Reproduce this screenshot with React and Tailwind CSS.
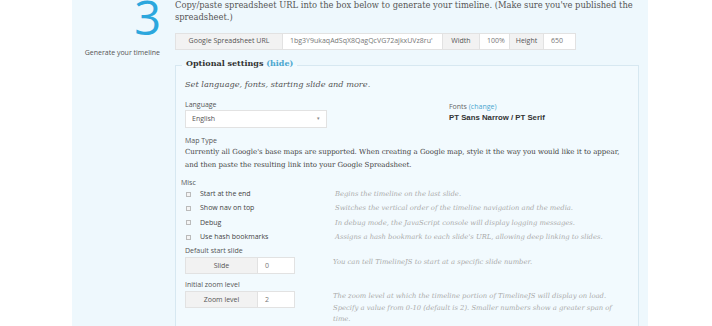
import React from 'react';

const serif = "font-['DejaVu_Serif',serif]";
const sans = "font-['Open_Sans',sans-serif]";

const miscOptions = [
    { label: 'Start at the end', help: 'Begins the timeline on the last slide.' },
    { label: 'Show nav on top', help: 'Switches the vertical order of the timeline navigation and the media.' },
    { label: 'Debug', help: 'In debug mode, the JavaScript console will display logging messages.' },
    { label: 'Use hash bookmarks', help: "Assigns a hash bookmark to each slide's URL, allowing deep linking to slides." },
];

const Addon = ({ children, className = '' }) => (
    <div className={`h-full flex items-center justify-center bg-[#f2f2f2] border border-[#e2e2e2] text-[#555] ${className}`}>
        {children}
    </div>
);

const Field = ({ children, className = '' }) => (
    <div className={`h-full flex items-center px-[7px] bg-white border border-l-0 border-[#e2e2e2] text-[#777] ${className}`}>
        {children}
    </div>
);

const SmallGroup = ({ label, value }) => (
    <div className={`flex h-[17px] text-[7px] shrink-0 ${sans}`}>
        <Addon className="w-[73px]">{label}</Addon>
        <Field className="w-[37px]">{value}</Field>
    </div>
);

const Label = ({ children, className = '' }) => (
    <div className={`text-[7px] leading-[10px] text-[#555] ${sans} ${className}`}>{children}</div>
);

export default function App() {
    return (
        <div className="w-[712px] h-[326px] overflow-hidden bg-white">
            <div className="ml-[72px] w-[576px] h-full bg-[#eef8fd] flex">
                {/* step number */}
                <div className="w-[103px] pr-[15px] flex flex-col items-end shrink-0">
                    <div className={`text-[47px] leading-[50px] text-[#2ca7dd] font-normal mt-[-8px] mr-[-1px] ${sans}`}>3</div>
                    <div className={`text-[7px] text-[#555] mt-[6px] ${sans}`}>Generate your timeline</div>
                </div>

                <div className="w-[464px]">
                    <p className={`text-[8.35px] leading-[12px] text-[#555] mt-[-1px] ${serif}`}>
                        Copy/paste spreadsheet URL into the box below to generate your timeline. (Make sure you've published the spreadsheet.)
                    </p>

                    <div className={`flex h-[17px] mt-[10px] text-[7px] ${sans}`}>
                        <Addon className="w-[108px]">Google Spreadsheet URL</Addon>
                        <Field className="w-[160px] overflow-hidden whitespace-nowrap">1bg3Y9ukaqAdSqX8QagQcVG72ajkxUVz8ru'</Field>
                        <Addon className="w-[37px] border-l-0">Width</Addon>
                        <Field className="w-[30px]">100%</Field>
                        <Addon className="w-[34px] border-l-0">Height</Addon>
                        <Field className="w-[32px]">650</Field>
                    </div>

                    <fieldset className="mt-[9px] border border-[#d7e8f1] bg-[#f2fafe] pl-[9px] pr-[10px] pb-[10px] min-w-0">
                        <legend className={`relative -top-[2px] ml-[-3px] px-[4px] text-[8px] leading-[12px] font-bold text-[#333] ${serif}`}>
                            Optional settings <span className="text-[#4aa6cf]">(hide)</span>
                        </legend>

                        <p className={`italic text-[8.2px] leading-[12px] text-[#555] mt-[7px] ${serif}`}>Set language, fonts, starting slide and more.</p>

                        <div className="flex mt-[10px]">
                            <div className="w-[264px]">
                                <Label>Language</Label>
                                <div className={`w-[142px] h-[18px] bg-white border border-[#e2e2e2] flex items-center justify-between px-[6px] text-[7px] text-[#555] ${sans}`}>
                                    <span>English</span>
                                    <span className="text-[5px] text-[#888]">▾</span>
                                </div>
                            </div>
                            <div className="pt-[2px]">
                                <Label className="text-[#666]">
                                    Fonts <span className="text-[#4aa6cf]">(change)</span>
                                </Label>
                                <div className="text-[7.8px] leading-[12px] font-bold text-[#333] font-['Liberation_Sans_Narrow','Liberation_Sans',sans-serif]">
                                    PT Sans Narrow / PT Serif
                                </div>
                            </div>
                        </div>

                        <Label className="mt-[8px]">Map Type</Label>
                        <p className={`w-[436px] text-[7px] leading-[13px] text-[#444] ${serif}`}>
                            Currently all Google's base maps are supported. When creating a Google map, style it the way you would like it to appear, and then paste the resulting link into your Google Spreadsheet.
                        </p>

                        <Label className="mt-[6px] ml-[-4px]">Misc</Label>
                        <div className="flex flex-col mt-[-1px]">
                            {miscOptions.map((opt) => (
                                <div key={opt.label} className="flex items-center h-[14.33px]">
                                    <div className="w-[15px] flex items-center">
                                        <span className="ml-[1px] w-[5px] h-[5px] border border-[#bbb] bg-[#f4f4f4]" />
                                    </div>
                                    <span className={`w-[135px] text-[7px] text-[#444] ${sans}`}>{opt.label}</span>
                                    <span className={`italic text-[6.8px] text-[#aaa] whitespace-nowrap ${serif}`}>{opt.help}</span>
                                </div>
                            ))}
                        </div>

                        <Label className="mt-[2px]">Default start slide</Label>
                        <div className="flex items-start mt-[1px]">
                            <SmallGroup label="Slide" value="0" />
                            <span className={`ml-[38px] italic text-[6.8px] leading-[10px] text-[#aaa] ${serif}`}>You can tell TimelineJS to start at a specific slide number.</span>
                        </div>

                        <Label className="mt-[6px]">Initial zoom level</Label>
                        <div className="flex items-start mt-[1px]">
                            <SmallGroup label="Zoom level" value="2" />
                            <p className={`ml-[38px] w-[300px] italic text-[6.8px] leading-[11.3px] text-[#aaa] ${serif}`}>
                                The zoom level at which the timeline portion of TimelineJS will display on load. Specify a value from 0-10 (default is 2). Smaller numbers show a greater span of time.
                            </p>
                        </div>
                    </fieldset>
                </div>
            </div>
        </div>
    );
}
